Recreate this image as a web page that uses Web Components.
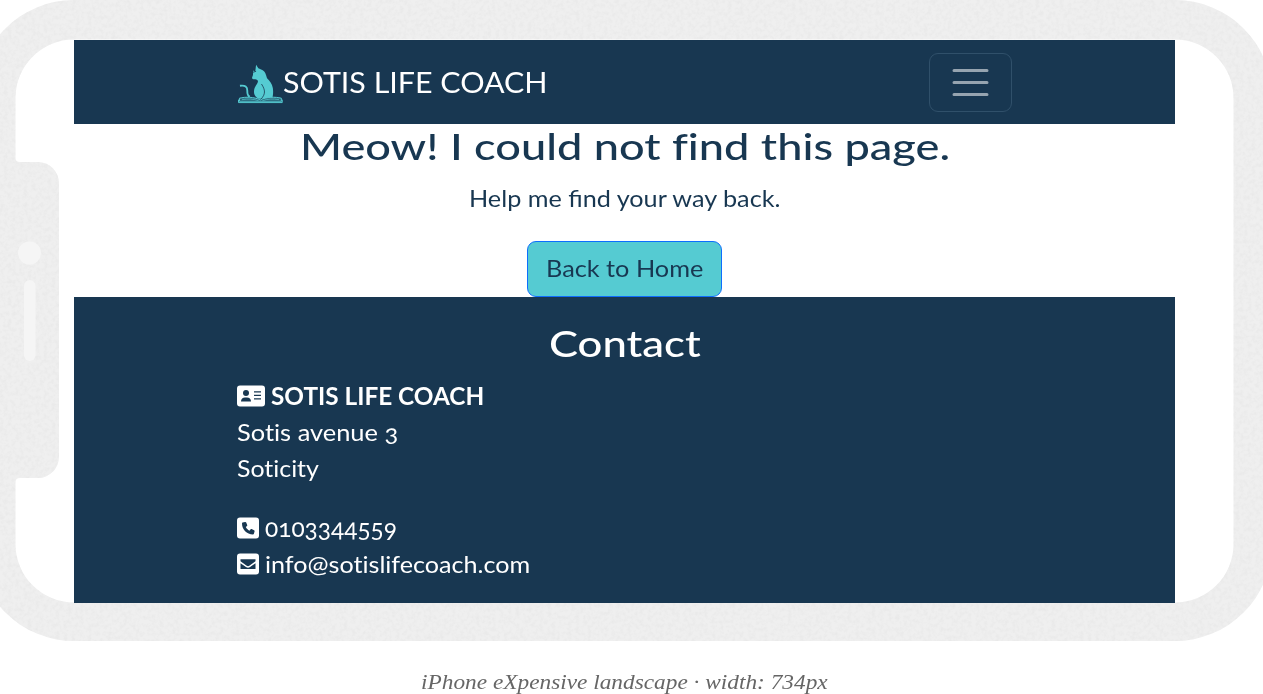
<!DOCTYPE html>
<html lang="en"><head><meta charset="utf-8"><title>Sotis Life Coach</title>
<style>
body{margin:0;overflow:hidden;background:#fff;font-family:Lato,"Open Sans",sans-serif;color:#183751;font-variant-ligatures:none}
</style></head><body>
<device-preview></device-preview>
<script>
const define=(name,html,setup)=>customElements.define(name,class extends HTMLElement{
 connectedCallback(){
  if(this.shadowRoot)return;
  const t=document.createElement('template');t.innerHTML=html;
  this.attachShadow({mode:'open'}).append(t.content.cloneNode(true));
  if(setup)setup(this);
 }
});
// Text stretched horizontally to the width given in its "w" attribute.
define('fit-text',`<style>:host{display:inline-block;white-space:nowrap;vertical-align:baseline;text-align:left}span{display:inline-block;transform-origin:0 50%}</style><span><slot></slot></span>`,el=>{
 const w=+el.getAttribute('w');el.style.width=w+'px';
 const s=el.shadowRoot.querySelector('span');
 s.style.transform=`scaleX(${w/s.offsetWidth})`;
});
define('cat-logo',`<style>:host{display:block;width:45px;height:40px}svg{display:block}</style>
<svg width="45" height="40" viewBox="0 0 46 40" fill="#55cbd2">
<path d="M18.500.3 20.800 4l4 1.800c3.400 1.700 3.800 5.300 4.900 8.200 2.600 2.400 5.200 5.600 5.900 10 .7 4.200.1 8-.6 11H21c-3.500-1.500-5-5-4.600-8.200.3-4 3.600-6.500 4-9.300.1-1.500-1.300-2-2.700-2.400-2 .5-3.500-.5-3.300-1.800l.9-2.500.3-4.500 2 1.200z"/>
<path d="M2 21.800c5.500-.8 7.600 1.200 7.500 5-.1 3.700.4 5.500 2.600 6.200" fill="none" stroke="#55cbd2" stroke-width="1.900"/>
<path d="M24 20c4 6 4.500 10.500-1 16" fill="none" stroke="#183751" stroke-width=".8"/>
<path d="M1.500 34.500c6-1.500 15-1.500 21.300 1.800 6.300-3.300 15.300-3.300 21.500-1.800v3H1.500zM.5 36v3h44.700v-3" fill="#2f6c80" stroke="#55cbd2" stroke-width="1"/>
<path d="M4 36c6-1 12-.8 17 1M42 36c-6-1-12-.8-17 1" fill="none" stroke="#55cbd2" stroke-width=".7"/>
<path d="m18.500 7-3 1" stroke="#183751" stroke-width=".8"/></svg>`);
define('menu-toggle',`<style>:host{display:block}button{display:grid;place-items:center;width:83px;height:59px;box-sizing:border-box;background:none;border:1px solid #30506a;border-radius:9px;padding:0}</style>
<button aria-label="Menu"><svg width="45" height="45" viewBox="0 0 30 30" stroke="#fff" stroke-opacity=".55" stroke-linecap="round" stroke-width="2"><path d="M4 7h22M4 15h22M4 23h22"/></svg></button>`);
define('site-nav',`<style>:host{display:flex;box-sizing:border-box;height:84px;background:#183751;color:#fff;padding:0 163px 0 164px;justify-content:space-between;align-items:center}
.brand{display:flex;align-items:center;font-size:29.500px;line-height:45px}cat-logo{margin-top:4px}fit-text{margin-bottom:2px}</style>
<div class="brand"><cat-logo></cat-logo><fit-text w="265">SOTIS LIFE COACH</fit-text></div><menu-toggle></menu-toggle>`);
define('not-found',`<style>:host{display:flex;flex-direction:column;align-items:center;height:173px}
h1{font:500 37px/44px Lato;font-variant-ligatures:none;margin:0}p{font-size:24px;line-height:36px;margin:12px 0 25px;font-variant-ligatures:normal}
a{display:block;text-align:center;box-sizing:border-box;width:195px;height:56px;padding-top:8px;border:1px solid #0d6efd;border-radius:9px;background:#55cbd2;font-size:24px;line-height:36px}</style>
<h1><fit-text w="650">Meow! I could not find this page.</fit-text></h1>
<p><fit-text w="311">Help me find your way back.</fit-text></p>
<a><fit-text w="157">Back to Home</fit-text></a>`);
define('contact-icon',`<style>:host{display:inline-block;margin-right:6px}svg{display:block}</style><svg height="22" fill="#fff" fill-rule="evenodd"></svg>`,el=>{
 const k=el.getAttribute('kind'),s=el.shadowRoot.querySelector('svg');
 s.setAttribute('width',k==='card'?28:22);
 s.innerHTML={
 card:'<path d="M3 .5h22a3 3 0 0 1 3 3v15a3 3 0 0 1-3 3H3a3 3 0 0 1-3-3v-15a3 3 0 0 1 3-3z"/><g fill="#183751"><circle cx="9" cy="8" r="3"/><path d="M4 16.500c0-2.500 1.700-4 4-4h2c2.300 0 4 1.500 4 4z"/><path d="M17 6.200h7v1.300h-7zm0 3.500h7V11h-7zm0 3.500h7v1.300h-7z"/></g>',
 phone:'<rect y=".5" width="22" height="21" rx="3"/><path fill="#183751" d="m5.600 5.600 2.500-.7c.5-.1.900.1 1.100.6l1 2.500c.2.400.1.800-.2 1.100L8.800 10.100c.8 1.600 2 2.800 3.600 3.600l1.100-1.300c.3-.3.700-.4 1.100-.3l2.500 1.100c.4.2.6.6.5 1.100l-.7 2.400c-.1.400-.5.700-.9.700C9.700 17.400 5 12.500 5 6.500c0-.400.2-.8.6-.900z"/>',
 mail:'<rect y=".5" width="22" height="21" rx="3"/><g fill="#183751"><path d="M3.500 6.300h15v2L12.300 12.700c-.8.600-1.800.6-2.600 0L3.500 8.300z"/><path d="M3.500 10.200 9 14.100c1.200.8 2.800.8 4 0l5.500-3.900v5.800h-15z"/></g>'}[k];
});
define('site-contact',`<style>:host{display:block;box-sizing:border-box;height:306px;background:#183751;color:#fff;padding:22px 163px 0}
h2{font:500 37px/48px Lato;margin:0 0 11px;text-align:center}.row{display:flex;align-items:center;height:36px;font-size:24px;line-height:36px}
.gap{margin-top:24px}b{font-weight:700}.num{font-variant-numeric:oldstyle-nums}.tel{font-size:25px;margin-bottom:3px}</style>
<h2><fit-text w="152">Contact</fit-text></h2>
<div class="row"><contact-icon kind="card"></contact-icon><b><fit-text w="213">SOTIS LIFE COACH</fit-text></b></div>
<div class="row"><fit-text class="num" w="161">Sotis avenue 3</fit-text></div>
<div class="row"><fit-text w="82">Soticity</fit-text></div>
<div class="row gap"><contact-icon kind="phone"></contact-icon><fit-text class="num tel" w="132">0103344559</fit-text></div>
<div class="row"><contact-icon kind="mail"></contact-icon><fit-text w="265">info@sotislifecoach.com</fit-text></div>`);
define('device-preview',`<style>:host{display:block}.phone{display:grid;height:641px}.shell,.screen{grid-area:1/1}.shell{display:block}
.screen{width:1101px;margin:40px 0 0 74px}figcaption{margin:26px 0 0 421px;font:italic 22px/30px "Liberation Serif",serif;color:#666}</style>
<div class="phone"><svg class="shell" width="1263" height="641">
<defs><filter id="grain" x="0" y="0" width="100%" height="100%" color-interpolation-filters="sRGB"><feTurbulence type="fractalNoise" baseFrequency=".25" numOctaves="3" seed="4"/><feColorMatrix values="0 0 0 0 .88  0 0 0 0 .88  0 0 0 0 .88  2.500 0 0 0 -1.050"/></filter>
<clipPath id="body"><path clip-rule="evenodd" d="M74 0H1175A97 97 0 0 1 1272 97V544A97 97 0 0 1 1175 641H74A97 97 0 0 1-23 544V97A97 97 0 0 1 74 0ZM74 39.500A58.500 58.500 0 0 0 15.500 98V158Q15.500 162 20 162H38A21 21 0 0 1 59 183V457A21 21 0 0 1 38 478H20Q15.500 478 15.500 482V544A58.500 58.500 0 0 0 74 602.500H1175A58.500 58.500 0 0 0 1233.500 544V98A58.500 58.500 0 0 0 1175 39.500Z"/></clipPath></defs>
<g clip-path="url(#body)"><path fill="#efefef" d="M0 0h1263v641H0z"/><rect width="1263" height="641" filter="url(#grain)" opacity=".36"/></g>
<circle cx="29.500" cy="253" r="11.500" fill="#f5f5f5"/><rect x="24" y="280" width="11.500" height="81" rx="5.700" fill="#f5f5f5"/></svg>
<div class="screen"><site-nav></site-nav><not-found></not-found><site-contact></site-contact></div></div>
<figcaption><fit-text w="407">iPhone eXpensive landscape · width: 734px</fit-text></figcaption>`);
</script></body></html>
